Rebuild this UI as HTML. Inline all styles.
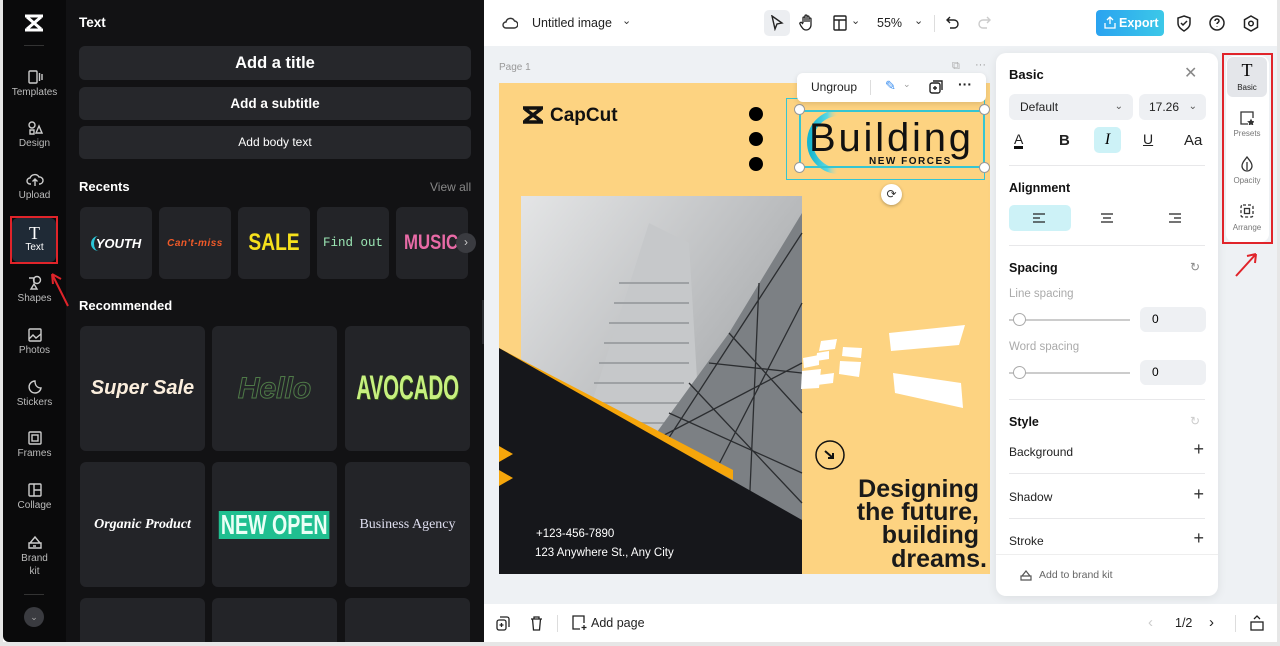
<!DOCTYPE html>
<html><head><meta charset="utf-8"><style>
*{box-sizing:border-box;margin:0;padding:0}
body{width:1280px;height:646px;overflow:hidden;background:#fff;font-family:"Liberation Sans",sans-serif;position:relative}
.abs{position:absolute}
.side{left:3px;top:0;width:63px;height:642px;background:#0a0a0b;border-radius:0 0 0 6px}
.panel{left:66px;top:0;width:418px;height:642px;background:#121214}
.si{position:absolute;left:0;width:63px;text-align:center;color:#bbb;font-size:10px}
.si svg{display:block;margin:0 auto 2px}
.btn{position:absolute;left:79px;width:392px;background:#26272b;border-radius:6px;color:#fff;text-align:center;font-weight:bold}
.tile{position:absolute;background:#232428;border-radius:6px;display:flex;align-items:center;justify-content:center;overflow:hidden;white-space:nowrap}
.top{left:484px;top:0;width:796px;height:46px;background:#fff}
.stage{left:484px;top:46px;width:796px;height:558px;background:#eef1f4}
.bot{left:484px;top:604px;width:796px;height:38px;background:#fff}
.rp{left:996px;top:53px;width:222px;height:543px;background:#fff;border-radius:10px;box-shadow:0 2px 10px rgba(0,0,0,.08)}
.lab{font-size:12px;color:#222}
.h{font-size:12.5px;font-weight:bold;color:#111}
.sep{position:absolute;left:13px;width:196px;height:1px;background:#e8e8ea}
.plus{position:absolute;right:14px;font-size:18px;color:#333;font-weight:300}
</style></head><body>
<div class="abs side"></div>
<div class="abs panel"></div>
<svg class="abs" style="left:23px;top:13px" width="22" height="20" viewBox="0 0 22 20"><path d="M2 3h18M2 17h18M4 4l14 12M18 4L4 16" stroke="#fff" stroke-width="3" fill="none"/></svg>
<div class="abs" style="left:24px;top:45px;width:20px;height:1px;background:#333"></div>
<div class="si" style="left:3px;top:69px"><svg width="16" height="16" viewBox="0 0 16 16" fill="none" stroke="#ccc" stroke-width="1.4"><rect x="2" y="2" width="8" height="12" rx="1"/><path d="M12.5 4v8M15 5v6"/></svg>Templates</div>
<div class="si" style="left:3px;top:120px"><svg width="16" height="16" viewBox="0 0 16 16" fill="none" stroke="#ccc" stroke-width="1.4"><circle cx="5" cy="5" r="3"/><path d="M9 13l3-7 3 7zM3 10h4v4H3z"/></svg>Design</div>
<div class="si" style="left:3px;top:172px"><svg width="18" height="16" viewBox="0 0 18 16" fill="none" stroke="#ccc" stroke-width="1.4"><path d="M5 12H4a3 3 0 010-6 5 5 0 019-1 3.5 3.5 0 011 7h-1M9 14V7M6.5 9.5L9 7l2.5 2.5"/></svg>Upload</div>
<div class="abs" style="left:10px;top:216px;width:48px;height:48px;border:2px solid #e0242a;"></div>
<div class="abs" style="left:12px;top:218px;width:44px;height:44px;background:#1f2a36;border-radius:6px"></div>
<div class="si" style="left:3px;top:224px;color:#fff"><span style="font-family:'Liberation Serif',serif;font-size:18px;line-height:18px;display:block">T</span>Text</div>
<svg class="abs" style="left:48px;top:268px" width="22" height="40"><path d="M20 38L4 6M4 6l1 10M4 6l9 5" stroke="#e0242a" stroke-width="2" fill="none"/></svg>
<div class="si" style="left:3px;top:275px"><svg width="16" height="16" viewBox="0 0 16 16" fill="none" stroke="#ccc" stroke-width="1.4"><circle cx="10" cy="5" r="3.5"/><path d="M2 3h5v5M4 14l3-5 3 5z"/></svg>Shapes</div>
<div class="si" style="left:3px;top:327px"><svg width="16" height="16" viewBox="0 0 16 16" fill="none" stroke="#ccc" stroke-width="1.4"><rect x="2" y="2" width="12" height="12" rx="1"/><path d="M2 12l4-4 3 3 5-4"/></svg>Photos</div>
<div class="si" style="left:3px;top:379px"><svg width="16" height="16" viewBox="0 0 16 16" fill="none" stroke="#ccc" stroke-width="1.4"><path d="M14 9A6 6 0 118 2c0 4 2 7 6 7z"/></svg>Stickers</div>
<div class="si" style="left:3px;top:430px"><svg width="16" height="16" viewBox="0 0 16 16" fill="none" stroke="#ccc" stroke-width="1.4"><rect x="2" y="2" width="12" height="12" rx="1"/><rect x="5" y="5" width="6" height="6"/></svg>Frames</div>
<div class="si" style="left:3px;top:482px"><svg width="16" height="16" viewBox="0 0 16 16" fill="none" stroke="#ccc" stroke-width="1.4"><rect x="2" y="2" width="12" height="12" rx="1"/><path d="M7 2v12M7 8h7"/></svg>Collage</div>
<div class="si" style="left:3px;top:534px;line-height:13px"><svg width="16" height="16" viewBox="0 0 16 16" fill="none" stroke="#ccc" stroke-width="1.4"><path d="M2 14V9h12v5zM3 9l5-6 5 6M6 12h3"/></svg>Brand<br>kit</div>
<div class="abs" style="left:24px;top:594px;width:20px;height:1px;background:#333"></div>
<div class="abs" style="left:24px;top:607px;width:20px;height:20px;border-radius:50%;background:#3a3b40;color:#aaa;font-size:9px;text-align:center;line-height:20px">⌄</div>

<div class="abs" style="left:79px;top:15px;color:#fff;font-weight:bold;font-size:13.5px">Text</div>
<div class="btn" style="top:46px;height:34px;line-height:34px;font-size:16.5px">Add a title</div>
<div class="btn" style="top:87px;height:33px;line-height:33px;font-size:13.5px">Add a subtitle</div>
<div class="btn" style="top:126px;height:33px;line-height:33px;font-size:12px;font-weight:normal">Add body text</div>
<div class="abs" style="left:79px;top:179px;color:#fff;font-weight:bold;font-size:13px">Recents</div>
<div class="abs" style="left:430px;top:180px;color:#888;font-size:12px">View all</div>
<div class="tile" style="left:80px;top:207px;width:72px;height:72px"><span style="color:#fff;font-style:italic;font-weight:bold;font-size:13px;border-left:3px solid #2bc5d6;border-radius:8px;padding-left:2px">YOUTH</span></div>
<div class="tile" style="left:159px;top:207px;width:72px;height:72px"><span style="color:#f05a28;font-style:italic;font-weight:bold;font-size:10px;letter-spacing:.5px">Can't-miss</span></div>
<div class="tile" style="left:238px;top:207px;width:72px;height:72px"><span style="color:#f6e11c;font-weight:bold;font-size:24px;transform:scaleX(.8)">SALE</span></div>
<div class="tile" style="left:317px;top:207px;width:72px;height:72px"><span style="color:#9be6b4;font-size:12.5px;font-family:'Liberation Mono',monospace">Find out</span></div>
<div class="tile" style="left:396px;top:207px;width:72px;height:72px;justify-content:flex-start;padding-left:8px"><span style="color:#e86aa6;font-weight:bold;font-size:21px;transform:scaleX(.8);transform-origin:left">MUSIC</span></div>
<div class="abs" style="left:456px;top:233px;width:20px;height:20px;border-radius:50%;background:#3a3b40;color:#ccc;font-size:12px;text-align:center;line-height:19px">›</div>
<div class="abs" style="left:79px;top:298px;color:#fff;font-weight:bold;font-size:13px">Recommended</div>
<div class="tile" style="left:80px;top:326px;width:125px;height:125px"><span style="color:#fbeedd;font-style:italic;font-weight:bold;font-size:20px">Super Sale</span></div>
<div class="tile" style="left:212px;top:326px;width:125px;height:125px"><span style="color:transparent;-webkit-text-stroke:1px #4f7a48;font-style:italic;font-weight:bold;font-size:30px">Hello</span></div>
<div class="tile" style="left:345px;top:326px;width:125px;height:125px"><span style="color:#c7f07f;font-weight:bold;font-size:34px;transform:scaleX(.6);text-shadow:1px 1px 0 #3f6b1b">AVOCADO</span></div>
<div class="tile" style="left:80px;top:462px;width:125px;height:125px"><span style="color:#fff;font-style:italic;font-weight:bold;font-size:14px;font-family:'Liberation Serif',serif">Organic Product</span></div>
<div class="tile" style="left:212px;top:462px;width:125px;height:125px"><span style="color:#eafff6;font-weight:bold;font-size:28px;transform:scaleX(.7);background:#1fbf90;padding:0 3px;line-height:28px">NEW OPEN</span></div>
<div class="tile" style="left:345px;top:462px;width:125px;height:125px"><span style="color:#dde;font-size:14px;font-family:'Liberation Serif',serif">Business Agency</span></div>
<div class="tile" style="left:80px;top:598px;width:125px;height:44px;border-radius:6px 6px 0 0"></div>
<div class="tile" style="left:212px;top:598px;width:125px;height:44px;border-radius:6px 6px 0 0"></div>
<div class="tile" style="left:345px;top:598px;width:125px;height:44px;border-radius:6px 6px 0 0"></div>
<div class="abs" style="left:482px;top:300px;width:8px;height:44px;background:#2a2b2f;border-radius:0 4px 4px 0"></div>

<div class="abs top"></div>
<svg class="abs" style="left:502px;top:16px" width="16" height="14" viewBox="0 0 16 14" fill="none" stroke="#333" stroke-width="1.4"><path d="M4 12a3 3 0 010-6 4.5 4.5 0 018.5-1A3.5 3.5 0 0112 12z"/></svg>
<div class="abs" style="left:532px;top:16px;font-size:12.5px;color:#222">Untitled image</div>
<div class="abs" style="left:622px;top:14px;font-size:11px;color:#333">⌄</div>
<div class="abs" style="left:764px;top:10px;width:26px;height:26px;background:#eceef1;border-radius:5px"></div>
<svg class="abs" style="left:770px;top:15px" width="14" height="16" viewBox="0 0 14 16" fill="none" stroke="#222" stroke-width="1.4"><path d="M2 1l10 7-5 1-2 5z"/></svg>
<svg class="abs" style="left:799px;top:14px" width="16" height="18" viewBox="0 0 16 18" fill="none" stroke="#222" stroke-width="1.3"><path d="M4 9V4a1 1 0 012 0v4M6 8V2a1 1 0 012 0v6M8 8V3a1 1 0 012 0v5M10 8V5a1 1 0 012 0v6a5 5 0 01-5 5c-2 0-3-1-5-4l-1-2a1 1 0 012-1l1 1"/></svg>
<svg class="abs" style="left:833px;top:15px" width="14" height="16" viewBox="0 0 14 16" fill="none" stroke="#222" stroke-width="1.4"><rect x="1" y="1" width="12" height="14" rx="1"/><path d="M1 5h12M6 5v10"/></svg>
<div class="abs" style="left:851px;top:14px;font-size:11px;color:#333">⌄</div>
<div class="abs" style="left:877px;top:16px;font-size:12.5px;color:#222">55%</div>
<div class="abs" style="left:914px;top:14px;font-size:11px;color:#333">⌄</div>
<div class="abs" style="left:934px;top:15px;width:1px;height:17px;background:#ddd"></div>
<svg class="abs" style="left:946px;top:16px" width="14" height="14" viewBox="0 0 14 14" fill="none" stroke="#222" stroke-width="1.4"><path d="M4 1L1 4l3 3M1 4h7a4 4 0 010 8H4"/></svg>
<svg class="abs" style="left:977px;top:16px" width="14" height="14" viewBox="0 0 14 14" fill="none" stroke="#ccc" stroke-width="1.4"><path d="M10 1l3 3-3 3M13 4H6a4 4 0 000 8h4"/></svg>
<div class="abs" style="left:1096px;top:10px;width:68px;height:26px;border-radius:4px;background:linear-gradient(90deg,#2aa3f0,#3cc8e8);color:#fff;font-size:12.5px;font-weight:bold;line-height:26px;padding-left:23px">Export</div>
<svg class="abs" style="left:1104px;top:16px" width="12" height="13" viewBox="0 0 12 13" fill="none" stroke="#fff" stroke-width="1.3"><path d="M6 8V1M3 4l3-3 3 3M1 7v5h10V7"/></svg>
<svg class="abs" style="left:1176px;top:15px" width="16" height="17" viewBox="0 0 16 17" fill="none" stroke="#222" stroke-width="1.5"><path d="M8 1l6 2v5c0 4-3 6-6 8-3-2-6-4-6-8V3z"/><path d="M5 8l2 2 4-4"/></svg>
<svg class="abs" style="left:1209px;top:15px" width="16" height="16" viewBox="0 0 16 16" fill="none" stroke="#222" stroke-width="1.5"><circle cx="8" cy="8" r="7"/><path d="M6 6a2 2 0 114 0c0 1.5-2 1.5-2 3M8 11.5v.5"/></svg>
<svg class="abs" style="left:1243px;top:15px" width="16" height="17" viewBox="0 0 16 17" fill="none" stroke="#222" stroke-width="1.5"><path d="M8 1l6.5 3.7v7.6L8 16l-6.5-3.7V4.7z"/><circle cx="8" cy="8.5" r="2.3"/></svg>

<div class="abs stage"></div>
<div class="abs" style="left:499px;top:62px;font-size:10px;color:#999">Page 1</div>
<div class="abs" style="left:952px;top:60px;font-size:11px;color:#aaa">⧉</div>
<div class="abs" style="left:975px;top:59px;font-size:11px;color:#999">···</div>

<svg class="abs" style="left:499px;top:83px" width="491" height="491" viewBox="0 0 491 491">
<defs>
<linearGradient id="sky" x1="0" y1="0" x2="1" y2="1"><stop offset="0" stop-color="#e4e5e6"/><stop offset="1" stop-color="#8d9093"/></linearGradient>
<linearGradient id="ring" x1="0" x2="1"><stop offset="0" stop-color="#16b6d0"/><stop offset=".6" stop-color="#5ad7e3"/><stop offset="1" stop-color="#fed685" stop-opacity="0"/></linearGradient>
</defs>
<rect width="491" height="491" fill="#fdd381"/>
<rect x="22" y="113" width="281" height="378" fill="url(#sky)"/>
<polygon points="150,140 190,160 200,330 130,420 80,360" fill="#c6c8ca"/>
<g stroke="#9ea1a4" stroke-width="2"><path d="M95 300h90M100 280h90M105 260h85M110 240h80M115 220h75M120 200h70M90 320h90M85 340h90"/></g>
<polygon points="303,130 303,491 160,491 150,360 230,250" fill="#7c8084"/>
<g stroke="#2b2d30" stroke-width="1.3" fill="none"><path d="M303 150L160 370M303 220L200 420M230 250l73 80M190 300l113 120M260 200l-10 230M303 280L150 360M170 330l133 60M210 280l93 10"/></g>
<polygon points="0,265 234,387 234,397 0,275" fill="#f6a60b"/>
<polygon points="0,265 303,437 303,491 0,491" fill="#16171b"/>
<polygon points="0,363 14,371 0,379" fill="#f6a60b"/><polygon points="0,387 14,395 0,403" fill="#f6a60b"/>
<text x="37" y="454" fill="#fff" font-size="11.5" font-family="Liberation Sans">+123-456-7890</text>
<text x="36" y="473" fill="#fff" font-size="11.5" font-family="Liberation Sans">123 Anywhere St., Any City</text>
<path d="M24 25h20M24 39h20M26 26l16 12M42 26L26 38" stroke="#111" stroke-width="3.5" fill="none"/>
<text x="51" y="38" fill="#111" font-size="19" font-weight="bold" font-family="Liberation Sans">CapCut</text>
<circle cx="257" cy="31" r="7" fill="#000"/><circle cx="257" cy="56" r="7" fill="#000"/><circle cx="257" cy="81" r="7" fill="#000"/>
<path d="M340 30a28 28 0 100 58" stroke="url(#ring)" stroke-width="6" fill="none"/>
<text x="310" y="68" fill="#111" font-size="40" font-family="Liberation Sans" textLength="162">Building</text>
<text x="370" y="81" fill="#111" font-size="10" font-weight="bold" letter-spacing="1.5" font-family="Liberation Sans">NEW FORCES</text>
<g fill="#fff"><polygon points="390,250 466,242 460,262 392,268"/><polygon points="394,290 462,300 464,325 396,310"/><polygon points="341,278 362,279 360,294 340,291"/><polygon points="344,264 363,265 362,275 343,273"/><polygon points="303,288 322,286 320,305 302,306"/><polygon points="304,275 320,272 320,282 305,285"/><polygon points="320,292 335,290 334,300 318,302"/><polygon points="318,270 330,268 330,276 317,278"/><polygon points="322,258 338,256 336,266 320,268"/></g>
<circle cx="331" cy="372" r="14" fill="none" stroke="#111" stroke-width="1.5"/><path d="M326 368l8 7M334 370v5h-5" stroke="#111" stroke-width="2" fill="none"/>
<g font-family="Liberation Sans" font-weight="bold" font-size="25" fill="#1a1a1a" text-anchor="end"><text x="480" y="414">Designing</text><text x="480" y="437">the future,</text><text x="480" y="460">building</text><text x="488" y="484">dreams.</text></g>
</svg>
<div class="abs" style="left:786px;top:98px;width:199px;height:82px;border:1.5px solid #36c5d2"></div>
<div class="abs" style="left:799px;top:110px;width:186px;height:58px;border:2px solid #36c5d2"></div>
<div class="abs" style="left:794px;top:104px;width:11px;height:11px;border-radius:50%;background:#fff;border:1px solid #999"></div>
<div class="abs" style="left:979px;top:104px;width:11px;height:11px;border-radius:50%;background:#fff;border:1px solid #999"></div>
<div class="abs" style="left:794px;top:162px;width:11px;height:11px;border-radius:50%;background:#fff;border:1px solid #999"></div>
<div class="abs" style="left:979px;top:162px;width:11px;height:11px;border-radius:50%;background:#fff;border:1px solid #999"></div>
<div class="abs" style="left:881px;top:184px;width:21px;height:21px;border-radius:50%;background:#fff;box-shadow:0 1px 3px rgba(0,0,0,.3);text-align:center;line-height:21px;font-size:12px;color:#333">⟳</div>
<div class="abs" style="left:797px;top:73px;width:189px;height:29px;background:#fff;border-radius:6px;box-shadow:0 2px 6px rgba(0,0,0,.12)"></div>
<div class="abs" style="left:811px;top:80px;font-size:12px;color:#222">Ungroup</div>
<div class="abs" style="left:870px;top:80px;width:1px;height:15px;background:#ddd"></div>
<div class="abs" style="left:885px;top:78px;font-size:13px;color:#3a8ef0">✎</div>
<div class="abs" style="left:903px;top:79px;font-size:9px;color:#999">⌄</div>
<svg class="abs" style="left:929px;top:80px" width="14" height="14" viewBox="0 0 14 14" fill="none" stroke="#222" stroke-width="1.4"><rect x="1" y="3" width="10" height="10" rx="2"/><path d="M4 1h9v9M6 6v4M4 8h4"/></svg>
<div class="abs" style="left:958px;top:76px;font-size:14px;color:#222;font-weight:bold">···</div>

<div class="abs rp">
<div class="abs h" style="left:13px;top:14px;font-size:13px">Basic</div>
<div class="abs" style="left:188px;top:10px;font-size:16px;color:#888">✕</div>
<div class="abs" style="left:13px;top:41px;width:124px;height:26px;background:#eef0f3;border-radius:6px;font-size:12px;line-height:26px;padding-left:11px;color:#222">Default<span style="position:absolute;right:10px;font-size:10px;color:#555">⌄</span></div>
<div class="abs" style="left:143px;top:41px;width:67px;height:26px;background:#eef0f3;border-radius:6px;font-size:12px;line-height:26px;padding-left:10px;color:#222">17.26<span style="position:absolute;right:9px;font-size:10px;color:#555">⌄</span></div>
<div class="abs" style="left:18px;top:79px;font-size:14px;color:#222;border-bottom:3px solid #111;line-height:14px">A</div>
<div class="abs" style="left:63px;top:79px;font-size:15px;font-weight:bold;color:#222">B</div>
<div class="abs" style="left:98px;top:74px;width:27px;height:26px;background:#cdf2f7;border-radius:5px;text-align:center;line-height:26px;font-style:italic;font-family:'Liberation Serif',serif;font-size:16px">I</div>
<div class="abs" style="left:147px;top:78px;font-size:14px;text-decoration:underline;color:#222">U</div>
<div class="abs" style="left:188px;top:79px;font-size:15px;color:#222">Aa</div>
<div class="sep" style="top:112px"></div>
<div class="abs h" style="left:13px;top:128px">Alignment</div>
<div class="abs" style="left:13px;top:152px;width:62px;height:26px;background:#cdf2f7;border-radius:5px"></div>
<svg class="abs" style="left:37px;top:160px" width="12" height="10"><path d="M0 1h12M0 5h7M0 9h12" stroke="#222" stroke-width="1.3"/></svg>
<svg class="abs" style="left:105px;top:160px" width="12" height="10"><path d="M0 1h12M2 5h8M0 9h12" stroke="#222" stroke-width="1.3"/></svg>
<svg class="abs" style="left:173px;top:160px" width="12" height="10"><path d="M0 1h12M5 5h7M0 9h12" stroke="#222" stroke-width="1.3"/></svg>
<div class="sep" style="top:192px"></div>
<div class="abs h" style="left:13px;top:208px">Spacing</div>
<div class="abs" style="left:194px;top:207px;font-size:12px;color:#888">↻</div>
<div class="abs" style="left:13px;top:235px;font-size:11.5px;color:#aaa">Line spacing</div>
<div class="abs" style="left:13px;top:266px;width:121px;height:1.5px;background:#ccc"></div>
<div class="abs" style="left:17px;top:260px;width:13px;height:13px;border-radius:50%;background:#fff;border:1px solid #aaa"></div>
<div class="abs" style="left:144px;top:254px;width:66px;height:25px;background:#eef0f3;border-radius:6px;font-size:12px;line-height:25px;padding-left:12px">0</div>
<div class="abs" style="left:13px;top:288px;font-size:11.5px;color:#aaa">Word spacing</div>
<div class="abs" style="left:13px;top:319px;width:121px;height:1.5px;background:#ccc"></div>
<div class="abs" style="left:17px;top:313px;width:13px;height:13px;border-radius:50%;background:#fff;border:1px solid #aaa"></div>
<div class="abs" style="left:144px;top:307px;width:66px;height:25px;background:#eef0f3;border-radius:6px;font-size:12px;line-height:25px;padding-left:12px">0</div>
<div class="sep" style="top:346px"></div>
<div class="abs h" style="left:13px;top:362px">Style</div>
<div class="abs" style="left:194px;top:361px;font-size:12px;color:#ccc">↻</div>
<div class="abs lab" style="left:13px;top:392px">Background</div><div class="plus" style="top:386px">+</div>
<div class="sep" style="top:420px"></div>
<div class="abs lab" style="left:13px;top:437px">Shadow</div><div class="plus" style="top:431px">+</div>
<div class="sep" style="top:465px"></div>
<div class="abs lab" style="left:13px;top:481px">Stroke</div><div class="plus" style="top:475px">+</div>
<div class="abs" style="left:0;top:501px;width:222px;height:1px;background:#eee"></div>
<svg class="abs" style="left:24px;top:517px" width="12" height="11" viewBox="0 0 12 11" fill="none" stroke="#555" stroke-width="1.2"><path d="M1 10V6h10v4zM2 6l4-5 4 5"/></svg>
<div class="abs" style="left:43px;top:516px;font-size:10.5px;color:#666">Add to brand kit</div>
</div>

<div class="abs" style="left:1226px;top:56px;width:43px;height:186px;background:#fff;border-radius:8px"></div>
<div class="abs" style="left:1222px;top:53px;width:51px;height:191px;border:2px solid #e0242a"></div>
<div class="abs" style="left:1227px;top:57px;width:40px;height:40px;background:#e4e6ea;border-radius:6px"></div>
<div class="abs" style="left:1227px;top:61px;width:40px;text-align:center;font-family:'Liberation Serif',serif;font-size:18px;line-height:18px">T</div>
<div class="abs" style="left:1227px;top:83px;width:40px;text-align:center;font-size:8px;color:#222">Basic</div>
<svg class="abs" style="left:1240px;top:111px" width="14" height="14" viewBox="0 0 14 14" fill="none" stroke="#333" stroke-width="1.3"><path d="M8 13H1V1h12v6"/><path d="M11 9l.8 1.5 1.6.3-1.2 1 .3 1.7-1.5-.8-1.5.8.3-1.7-1.2-1 1.6-.3z" fill="#333"/></svg>
<div class="abs" style="left:1227px;top:129px;width:40px;text-align:center;font-size:8px;color:#777">Presets</div>
<svg class="abs" style="left:1240px;top:156px" width="14" height="16" viewBox="0 0 14 16" fill="none" stroke="#333" stroke-width="1.3"><path d="M7 1C4 5 2 7 2 10a5 5 0 0010 0c0-3-2-5-5-9z"/><path d="M7 6v8" /></svg>
<div class="abs" style="left:1227px;top:176px;width:40px;text-align:center;font-size:8px;color:#777">Opacity</div>
<svg class="abs" style="left:1240px;top:204px" width="14" height="14" viewBox="0 0 14 14" fill="none" stroke="#333" stroke-width="1.3"><rect x="1" y="1" width="12" height="12" rx="2" stroke-dasharray="3 2"/><rect x="4.5" y="4.5" width="5" height="5"/></svg>
<div class="abs" style="left:1227px;top:223px;width:40px;text-align:center;font-size:8px;color:#777">Arrange</div>
<svg class="abs" style="left:1234px;top:250px" width="26" height="28"><path d="M2 26L22 4M22 4l-9 2M22 4l-1 9" stroke="#e0242a" stroke-width="2" fill="none"/></svg>

<div class="abs bot"></div>
<svg class="abs" style="left:496px;top:616px" width="14" height="15" viewBox="0 0 14 15" fill="none" stroke="#222" stroke-width="1.3"><rect x="1" y="4" width="9" height="10" rx="2"/><path d="M4 1h7a2 2 0 012 2v8M5.5 7v4M3.5 9h4"/></svg>
<svg class="abs" style="left:530px;top:616px" width="13" height="15" viewBox="0 0 13 15" fill="none" stroke="#222" stroke-width="1.3"><path d="M1 3h11M4 3V1h5v2M2.5 3l1 11h6l1-11"/></svg>
<div class="abs" style="left:557px;top:615px;width:1px;height:17px;background:#ddd"></div>
<svg class="abs" style="left:572px;top:615px" width="15" height="16" viewBox="0 0 15 16" fill="none" stroke="#222" stroke-width="1.3"><path d="M8 14H1V1h11v7M12 10v5M9.5 12.5h5"/></svg>
<div class="abs" style="left:591px;top:616px;font-size:12.5px;color:#222">Add page</div>
<div class="abs" style="left:1148px;top:614px;font-size:15px;color:#ccc">‹</div>
<div class="abs" style="left:1175px;top:616px;font-size:12.5px;color:#222">1/2</div>
<div class="abs" style="left:1209px;top:614px;font-size:15px;color:#222">›</div>
<div class="abs" style="left:1235px;top:615px;width:1px;height:17px;background:#ddd"></div>
<svg class="abs" style="left:1250px;top:614px" width="14" height="17" viewBox="0 0 14 17" fill="none" stroke="#222" stroke-width="1.3"><rect x="1" y="8" width="12" height="8"/><path d="M4 5l3-3 3 3"/></svg>
<div class="abs" style="left:484px;top:642px;width:796px;height:4px;background:#e6e6e6"></div>
<div class="abs" style="left:0;top:642px;width:484px;height:4px;background:#e6e6e6"></div>
<div class="abs" style="left:0;top:0;width:3px;height:646px;background:#e6e6e6"></div>
<div class="abs" style="left:1277px;top:0;width:3px;height:646px;background:#e6e6e6"></div>
</body></html>
